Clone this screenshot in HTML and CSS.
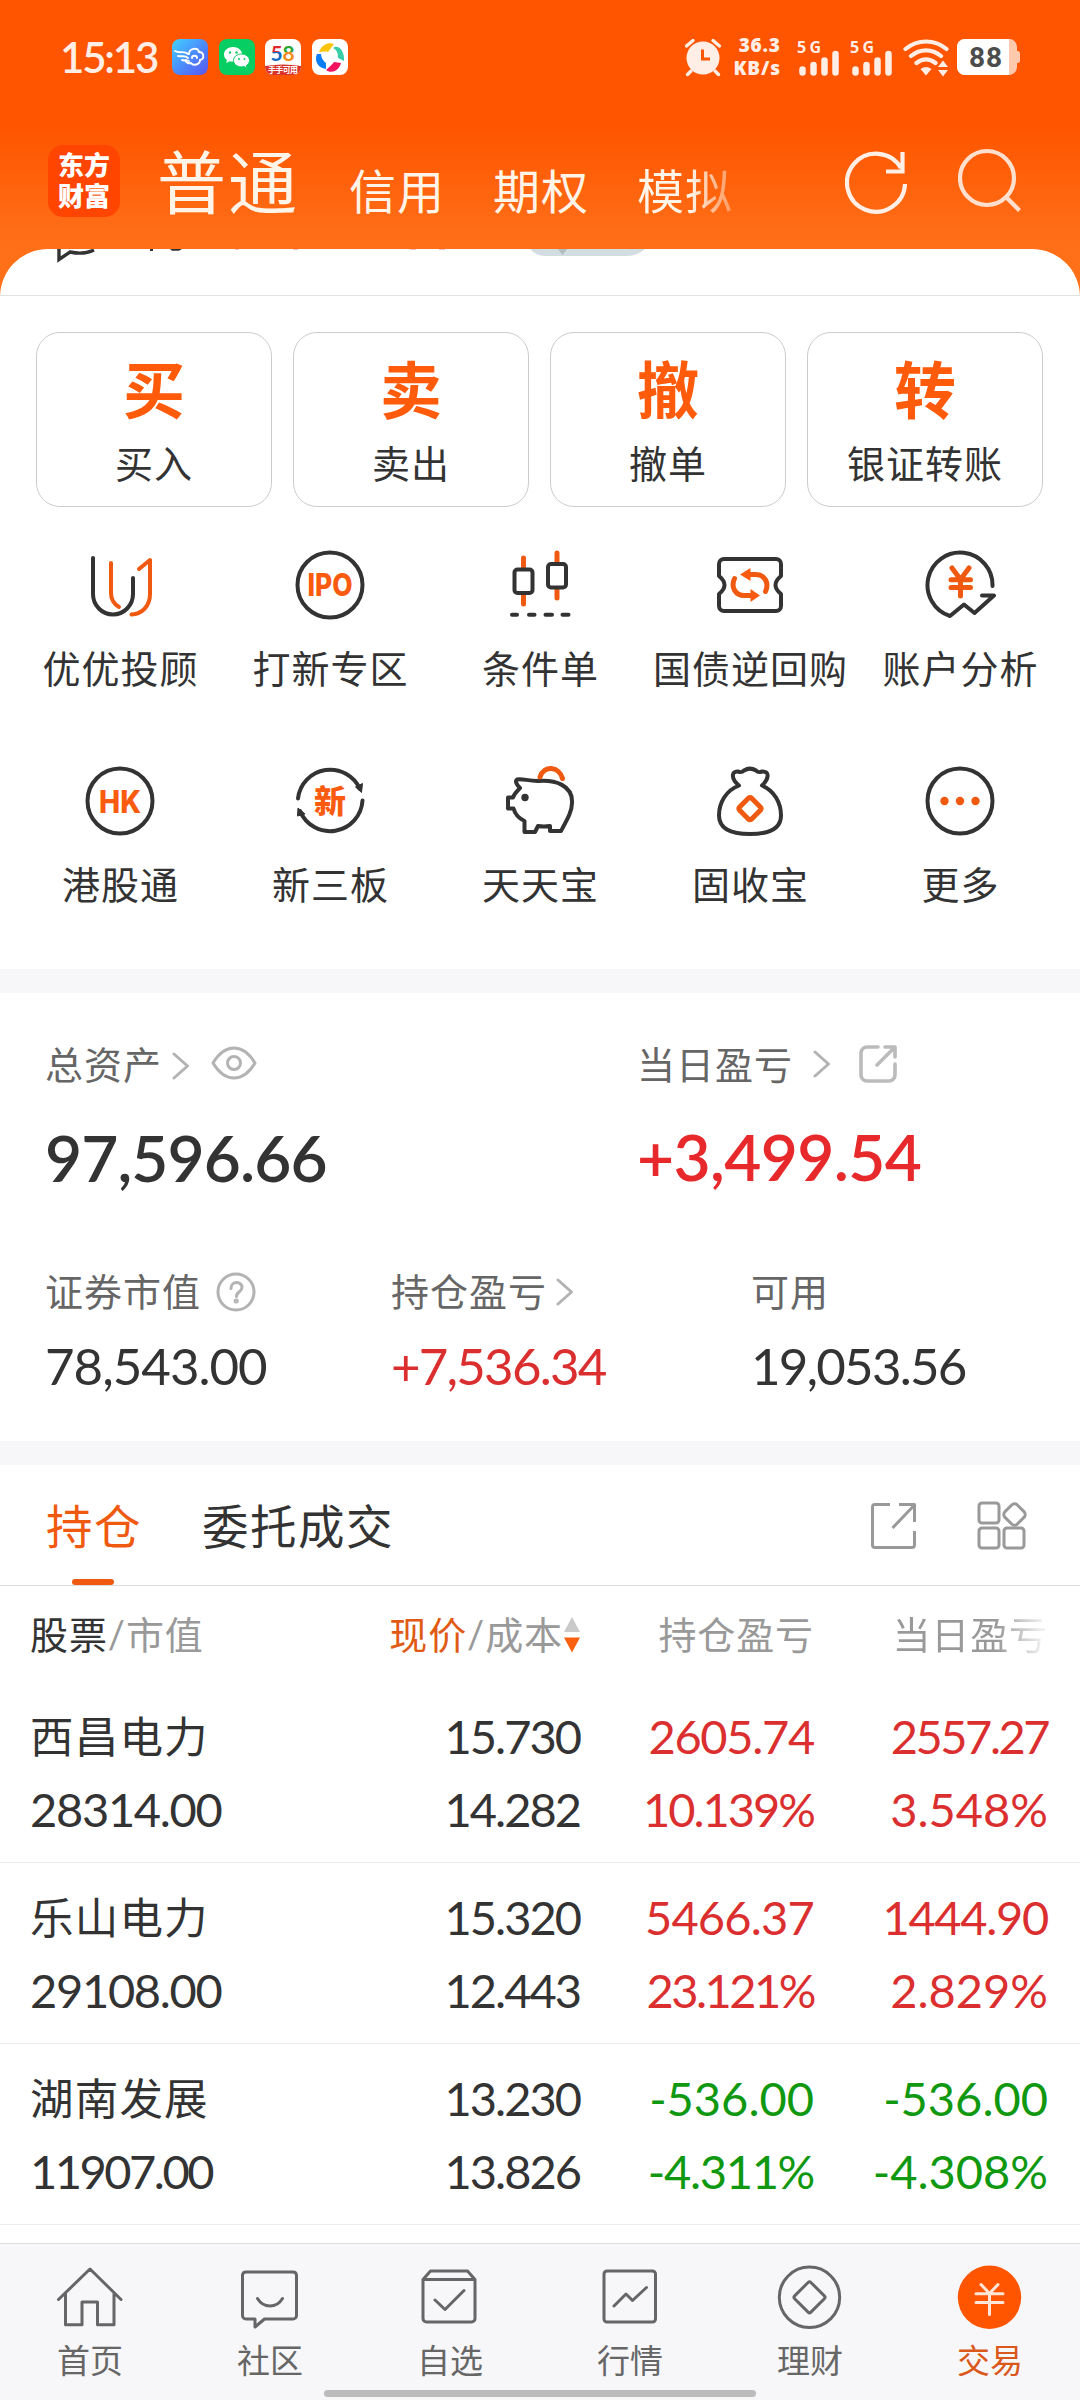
FILE: index.html
```html
<!DOCTYPE html>
<html lang="zh-CN">
<head>
<meta charset="utf-8">
<title>交易</title>
<link rel="stylesheet" href="styles.css">
</head>
<body>
<div class="app">
<header class="top">
  <div class="status">
    <span class="clock">15:13</span>
    <div class="apps">
      <svg width="36" height="36" viewBox="0 0 36 36"><defs><linearGradient id="sky" x1="0" y1="0" x2="1" y2="1"><stop offset="0" stop-color="#41d3ff"/><stop offset=".5" stop-color="#4a8dfb"/><stop offset="1" stop-color="#5a55f2"/></linearGradient></defs><rect width="36" height="36" rx="8" fill="url(#sky)"/><g fill="none" stroke="#fff" stroke-width="1.9" stroke-linecap="round"><path d="M3 12c5 3 9-1 13 3M6 17c4 1 7-1 10 2M10 21c3 1 5 0 7 1"/><path d="M17 15c0-6 9-7 10-2 5 0 6 7 1 8 0 5-7 6-9 3-4 1-6-2-5-3M20 19c0-3 5-3 5 0"/></g></svg>
      <svg width="36" height="36" viewBox="0 0 36 36"><rect width="36" height="36" rx="8" fill="#07ce62"/><path d="M14 8c-5 0-9 3.400-9 7.500 0 2.300 1.200 4.300 3 5.600l-.8 3 3.500-1.800c4 1 12-1 12.500-6.800C23.200 11.400 19 8 14 8z" fill="#fff"/><path d="M22.500 15c-4.500 0-8 2.900-8 6.500s3.500 6.400 8 6.400l2.500-.3 3 1.500-.7-2.500c2-1.200 3.200-3 3.200-5.100 0-3.600-3.500-6.500-8-6.500z" fill="#fff" stroke="#07ce62"/><g fill="#07ce62"><circle cx="11" cy="13.500" r="1.200"/><circle cx="17.500" cy="13.500" r="1.200"/><circle cx="20" cy="20" r="1"/><circle cx="25.500" cy="20" r="1"/></g></svg>
      <svg width="36" height="36" viewBox="0 0 36 36"><defs><clipPath id="r58"><rect width="36" height="36" rx="8"/></clipPath><linearGradient id="five" x1="0" y1="0" x2="0" y2="1"><stop offset=".5" stop-color="#e0282d"/><stop offset=".5" stop-color="#1568c0"/></linearGradient><linearGradient id="eight" x1="0" y1="0" x2="0" y2="1"><stop offset=".5" stop-color="#2ba436"/><stop offset=".5" stop-color="#f08b1d"/></linearGradient></defs><g clip-path="url(#r58)"><rect width="36" height="36" fill="#fff"/><path d="M0 27q18-3 36 0v9H0z" fill="#d9322a"/><text x="5.500" y="22" class="n58" fill="url(#five)">5</text><text x="17.500" y="22" class="n58" fill="url(#eight)">8</text><text x="3" y="34" class="s58" textLength="30">手手可用</text></g></svg>
      <svg width="36" height="36" viewBox="0 0 36 36"><rect width="36" height="36" rx="8" fill="#fff"/><path d="M7 13C10 5 17 3 22 5l-6 8c-3-1-6 0-9 0z" fill="#fcc40b"/><path d="M21 9c5-4 12 3 11 13l-6-3c0-5-1-8-5-10z" fill="#38cda8"/><path d="M5 15c-3 7 1 14 9 15v-6c-3-2-5-6-5-9z" fill="#0a7cf5"/><path d="M14 31c5 4 13 1 15-7l-7-1c-2 3-5 5-8 8z" fill="#f3125d"/></svg>
    </div>
    <div class="radios">
      <svg class="alarm" width="38" height="40" viewBox="0 0 38 40"><g fill="none" stroke="#ffeee6" stroke-width="3.400" stroke-linecap="round"><path d="M2.500 9 9 3.500M35.500 9 29 3.500M7 34l-3.500 3.500M31 34l3.500 3.500"/></g><circle cx="19" cy="21" r="16.500" fill="#ffeee6"/><path d="M18.500 12.500V22H26" fill="none" stroke="#ff5500" stroke-width="3"/></svg>
      <div class="speed"><b>36.3</b><b>KB/s</b></div>
      <svg class="sig" width="44" height="40" viewBox="0 0 44 40"><text class="g5" x="0" y="16" textLength="24">5G</text><g stroke="#ffeee6" stroke-width="6.500" stroke-linecap="round"><path d="M5.500 32.500v3M16.500 28v7.500M27.500 23.500v12M38.500 17v18.500"/></g></svg>
      <svg class="sig" width="44" height="40" viewBox="0 0 44 40"><text class="g5" x="0" y="16" textLength="24">5G</text><g stroke="#ffeee6" stroke-width="6.500" stroke-linecap="round"><path d="M5.500 32.500v3M16.500 28v7.500M27.500 23.500v12M38.500 17v18.500"/></g></svg>
      <svg class="wifi" width="46" height="40" viewBox="0 0 46 40"><g fill="none" stroke="#ffeee6" stroke-width="4.200" stroke-linecap="round"><path d="M2.500 12c12-10 29-10 41 0M8 19c9-7.500 21-7.500 30 0M13.500 26c6-4.500 13-4.500 19 0"/></g><path d="M17.500 32q5.500-4 11 0L23 38.500zM35 30l5-6.500 5 6.500zM35 33l5 6.500 5-6.500z" fill="#ffeee6"/></svg>
      <svg class="bat" width="64" height="36" viewBox="0 0 64 36"><path d="M8 0H53a8 8 0 0 1 7 8v4c3 0 3 2 3 3v6c0 1 0 3-3 3v4a8 8 0 0 1-7 8H8a8 8 0 0 1-8-8V8a8 8 0 0 1 8-8z" fill="#ffc9ae"/><path d="M8 0H52V36H8a8 8 0 0 1-8-8V8a8 8 0 0 1 8-8z" fill="#fff"/><text x="12" y="28" class="pct" textLength="34">88</text></svg>
    </div>
  </div>
  <div class="bar">
    <div class="logo"><span>东方</span><span>财富</span></div>
    <nav class="modes"><span class="on">普通</span><span>信用</span><span>期权</span><span class="fade">模拟</span></nav>
    <svg class="refresh" width="64" height="66" viewBox="0 0 64 66"><path d="M60 35A29 29 0 1 1 56 19M57.500 3V22.500H41" fill="none" stroke="#ffefe6" stroke-width="4.200"/></svg>
    <svg class="search" width="66" height="66" viewBox="0 0 66 66"><circle cx="29" cy="30" r="27" fill="none" stroke="#ffe0cf" stroke-width="4.200"/><path d="M47.500 48.500 61.500 62.500" stroke="#ffe0cf" stroke-width="4.200"/></svg>
  </div>
</header>

<main class="panel">
  <div class="peek">
    <svg width="1080" height="14" viewBox="0 0 1080 14"><path d="M59 0v10.500L70 3c9 2 18 1 24-2" fill="none" stroke="#333" stroke-width="3.400"/><path d="M150 0h3v2h-3zM170 0h12l-3 1.800h-7z" fill="#333"/><path d="M235 0h4v.6h-4zM293 0h5v.6h-5zM410 0h6v.6h-6zM439 0h6v.6h-6z" fill="#e8292b" opacity=".6"/><path d="M530 0q6 7 15 7h82q10 0 18-7z" fill="#d3dde1"/><path d="M558 0h9l-4.500 6z" fill="#b3bcc0"/></svg>
  </div>

  <section class="cards">
    <div class="card"><b>买</b><span>买入</span></div>
    <div class="card"><b>卖</b><span>卖出</span></div>
    <div class="card"><b>撤</b><span>撤单</span></div>
    <div class="card"><b>转</b><span>银证转账</span></div>
  </section>

  <section class="tools">
    <div class="tool"><svg viewBox="0 0 72 72"><path class="k" d="M9 9V45a20 20.500 0 0 0 40 0V29"/><path class="o" d="M27 14V44c0 6 3 11 8 14M55 20 66 11V45c0 12-8 20-18.500 20.500"/></svg><span>优优投顾</span></div>
    <div class="tool"><svg viewBox="0 0 72 72"><circle class="k" cx="36" cy="36" r="32.500"/><text x="13.500" y="47" class="ipo" textLength="45" lengthAdjust="spacingAndGlyphs">IPO</text></svg><span>打新专区</span></div>
    <div class="tool"><svg viewBox="0 0 72 72"><path class="o w" d="M19.500 9v9M19.500 47v8M53 4v9M53 41v8"/><rect class="k" x="10.500" y="20.500" width="18" height="23.500" rx="3"/><rect class="k" x="44" y="15" width="18" height="23.500" rx="3"/><path class="k" d="M8 65.700h5M25 65.700h5.500M41.500 65.700h6.500M58.500 65.700h6"/></svg><span>条件单</span></div>
    <div class="tool"><svg viewBox="0 0 72 72"><path class="k" d="M10 10H62a5 5 0 0 1 5 5V27q-11 9 0 18V57a5 5 0 0 1-5 5H10a5 5 0 0 1-5-5V45q11-9 0-18V15a5 5 0 0 1 5-5z"/><path class="o w" d="M20.500 29.500c-4 9 1 17 10 17H37M51.500 42.500c4-9-1-17-10-17H35"/><path d="M26 25.500 36.500 19v13zM46 46.500 36.500 40v13z" fill="#fa5b0f"/></svg><span>国债逆回购</span></div>
    <div class="tool"><svg viewBox="0 0 72 72"><path class="k" d="M68.500 37A32.500 32.500 0 1 0 26 67L40 55.500 50.500 64 70 46.500H58"/><path class="o w" d="M28 19l8.500 11.500L45 19M36.500 31V47M27 30.800H46.500M27 38.500H46.500"/></svg><span>账户分析</span></div>
    <div class="tool"><svg viewBox="0 0 72 72"><circle class="k" cx="36" cy="36" r="32.500"/><text x="15" y="47.500" class="ipo" textLength="42" lengthAdjust="spacingAndGlyphs">HK</text></svg><span>港股通</span></div>
    <div class="tool"><svg viewBox="0 0 72 72"><path class="k" d="M4 33.500A32.500 32.500 0 0 1 66 24M68.500 35.500A32.500 32.500 0 0 1 6 46"/><path d="M61.500 22l7-3.500-1 9zM4 43l7 6-7.500 2z" fill="#333" stroke="#333"/><text x="20" y="47.500" class="xin">新</text></svg><span>新三板</span></div>
    <div class="tool"><svg viewBox="0 0 72 72"><path class="k" d="M16 23C12 19 11 16 13 14.500c5-1.500 12 2 22 1.500 16-1 34 4 33 22 0 8-4 15-11 28H46v-5q-6 1-12 0l-3 6H20.500V56C14 53 11 49 9.500 43.500H4V32.500H9c1-4 4-6 7-9.500z"/><circle cx="21" cy="32.500" r="3.700" fill="#333"/><path class="o w" d="M36 12c4-12 19-11 22.500 1.500"/></svg><span>天天宝</span></div>
    <div class="tool"><svg viewBox="0 0 72 72"><path class="k" d="M25 20.500C17 14 17 6 24 6.500c3 1 4 1 6-1 4-2.500 8-2.500 12 0 2 2 3 2 6 1 8-.5 7 7.500 0 14 12 5 19 17 19 30 0 12-10 18.500-31 18.500S5 62.500 5 50.500c0-13 7-25 20-30z"/><rect class="o w" x="-8.500" y="-8.500" width="17" height="17" rx="2" transform="translate(36 43.600) rotate(45)"/></svg><span>固收宝</span></div>
    <div class="tool"><svg viewBox="0 0 72 72"><circle class="k" cx="36" cy="36" r="32.500"/><g fill="#f05a10"><circle cx="20.500" cy="36" r="4.200"/><circle cx="36" cy="36" r="4.200"/><circle cx="51.500" cy="36" r="4.200"/></g></svg><span>更多</span></div>
  </section>

  <section class="assets">
    <div class="main-row">
      <div class="cell">
        <div class="lab"><span>总资产</span><svg class="chev c1" viewBox="0 0 18 28"><path d="M2 2 15.500 14 2 26"/></svg><svg class="eye" viewBox="0 0 46 34"><path d="M2 17Q11 2 23 2T44 17Q35 32 23 32T2 17z"/><circle cx="23" cy="17" r="6.500"/></svg></div>
        <div class="big">97,596.66</div>
      </div>
      <div class="cell">
        <div class="lab"><span>当日盈亏</span><svg class="chev c2" viewBox="0 0 18 28"><path d="M2 2 15.500 14 2 26"/></svg><svg class="share" viewBox="0 0 40 40"><path d="M20 3H9a6 6 0 0 0-6 6V31a6 6 0 0 0 6 6H31a6 6 0 0 0 6-6V20M27 3H37V13M36 4 19 21"/></svg></div>
        <div class="big up">+3,499.54</div>
      </div>
    </div>
    <div class="sub-row">
      <div class="cell"><div class="lab"><span>证券市值</span><svg class="help" viewBox="0 0 40 40"><circle cx="20" cy="20" r="18"/><path d="M15 16.500c0-8 11-7.500 11-1 0 4.500-5.500 4-5.500 9"/><circle cx="20.200" cy="29" r="1" /></svg></div><div class="mid">78,543.00</div></div>
      <div class="cell"><div class="lab"><span>持仓盈亏</span><svg class="chev c3" viewBox="0 0 18 28"><path d="M2 2 15.500 14 2 26"/></svg></div><div class="mid up">+7,536.34</div></div>
      <div class="cell"><div class="lab"><span>可用</span></div><div class="mid nar">19,053.56</div></div>
    </div>
  </section>

  <section class="holdings">
    <div class="tabs">
      <span class="tab on">持仓</span><span class="tab">委托成交</span>
      <svg class="t1" viewBox="0 0 50 50"><path d="M21 3.500H6A2.500 2.500 0 0 0 3.500 6V44A2.500 2.500 0 0 0 6 46.500H43A2.500 2.500 0 0 0 45.500 44V30M30 3.500H45.500V21M44.500 5 23.500 27"/></svg>
      <svg class="t2" viewBox="0 0 52 52"><rect x="3" y="3" width="20" height="20" rx="3"/><rect x="3" y="28" width="20" height="20" rx="3"/><rect x="28" y="28" width="20" height="20" rx="3"/><rect x="-8.700" y="-8.700" width="17.400" height="17.400" rx="4" transform="translate(38.500 14.500) rotate(45)"/></svg>
    </div>
    <div class="row head">
      <span class="name"><i class="dk">股票</i>/市值</span>
      <span class="c"><i class="or">现价</i>/成本<svg class="sort" viewBox="0 0 16 36"><path d="M8 0 16 15H0z" fill="#c9c9c9"/><path d="M0 20.500H16L8 35.500z" fill="#f9600f"/></svg></span>
      <span class="c">持仓盈亏</span><span class="c last">当日盈亏</span>
    </div>
    <div class="row"><span class="name"><em>西昌电力</em>28314.00</span><span class="c s2">15.730<br>14.282</span><span class="c up">2605.74<br><i class="s2">10.139%</i></span><span class="c up"><i class="s3">2557.27</i><br><i class="s0">3.548%</i></span></div>
    <div class="row"><span class="name"><em>乐山电力</em>29108.00</span><span class="c s2">15.320<br>12.443</span><span class="c up"><i class="s1">5466.37</i><br><i class="s3">23.121%</i></span><span class="c up">1444.90<br><i class="s0">2.829%</i></span></div>
    <div class="row"><span class="name"><em>湖南发展</em><i class="s3">11907.00</i></span><span class="c s2">13.230<br>13.826</span><span class="c down"><i class="s0">-536.00</i><br>-4.311%</span><span class="c down"><i class="s0">-536.00<br>-4.308%</i></span></div>
  </section>
</main>

<footer class="dock">
  <div class="it"><svg viewBox="0 0 72 72"><path d="M4.500 38.500 36 8 67 38.500M11.500 33V63.700H28V41H43.500V63.700H60V33"/></svg>首页</div>
  <div class="it"><svg viewBox="0 0 72 72"><path d="M12 11H59a3.500 3.500 0 0 1 3.500 3V54.500a3.500 3.500 0 0 1-3.500 3.500H30.500L21 66V58H12a3.500 3.500 0 0 1-3.500-3.500V14a3.500 3.500 0 0 1 3.500-3zM23.500 37.500c6 10 19 10 25 0"/></svg>社区</div>
  <div class="it"><svg viewBox="0 0 72 72"><path d="M9 18.500 16.500 10H53.500L61 18.500V57.500a3.500 3.500 0 0 1-3.500 3.500H12.500A3.500 3.500 0 0 1 9 57.500V18.500H61M21 39 31 48.500 50 29.500"/></svg>自选</div>
  <div class="it"><svg viewBox="0 0 72 72"><rect x="10" y="10" width="51.500" height="51" rx="3"/><path d="M20 45 32 33l6.500 6.500L52.500 26.500"/></svg>行情</div>
  <div class="it"><svg viewBox="0 0 72 72"><circle cx="35.500" cy="36.300" r="30.200"/><rect x="-11.500" y="-11.500" width="23" height="23" rx="2" transform="translate(35.500 36.300) rotate(45)"/></svg>理财</div>
  <div class="it on"><svg viewBox="0 0 72 72"><circle cx="35.500" cy="36.300" r="31.700" fill="#ff5500" stroke="none"/><path d="M27 23.500 35.500 32.500 44 23.500M35.500 32V53.500M22 32.700H49M22 41.500H49" stroke="#ffe6d8"/></svg>交易</div>
  <div class="pill"></div>
</footer>
</div>
</body>
</html>
```
FILE: styles.css
```css
* { box-sizing: border-box; }
body { margin: 0; background: #fff; }
.app {
  width: 1080px; height: 2400px; overflow: hidden; position: relative;
  display: flex; flex-direction: column;
  font-family: Lato, "Noto Sans CJK SC", sans-serif;
  color: #333; font-size: 38px; letter-spacing: 1px; line-height: 1;
}
svg { display: block; flex: none; }
i, em { font-style: normal; }

/* header */
.top {
  flex: none; height: 296px; margin-bottom: -47px;
  background: linear-gradient(#ff5500 0, #ff5500 128px, #ff6f18 240px, #ff7019 100%);
  color: #fff2ea;
}
.status { height: 113px; padding-left: 60px; display: flex; align-items: center; }
.clock { width: 112px; font-size: 42px; font-weight: 600; letter-spacing: -2.200px; line-height: 50px; color: #ffeee6; white-space: nowrap; }
.apps { display: flex; gap: 10.600px; }
.n58 { font: 700 21px Lato, sans-serif; letter-spacing: 0; }
.s58 { font: 700 8px "Noto Sans CJK SC", sans-serif; fill: #fff; letter-spacing: 0; }
.radios { display: flex; align-items: center; margin-left: 336px; color: #ffeee6; }
.speed { width: 62px; margin-left: 13px; display: flex; flex-direction: column; gap: 4px; font: 700 19px/19px "Noto Sans", sans-serif; letter-spacing: .8px; }
.speed b { width: 46px; display: flex; justify-content: flex-end; }
.sig { margin-right: 9px; overflow: visible; }
.g5 { font: 700 16px "Noto Sans", sans-serif; fill: #ffeee6; letter-spacing: 0; }
.wifi { margin-right: 8px; }
.pct { font: 700 28px Roboto, sans-serif; fill: #4c4c4c; }
.bar { height: 136px; padding: 32px 0 0 48px; display: flex; align-items: flex-start; }
.logo {
  width: 72px; height: 72px; border-radius: 15px; background: #ff4500;
  display: flex; flex-direction: column; align-items: center; justify-content: center;
  font-size: 26px; line-height: 31px; font-weight: 900; letter-spacing: 0; color: #fff;
}
.modes { display: flex; align-items: baseline; width: 725px; padding-left: 37px; font-size: 47px; line-height: 76px; color: #fff4e8; }
.modes span { margin-right: 48px; }
.modes .on { font-size: 69px; letter-spacing: 2px; margin-right: 50px; }
.modes .fade { margin: 0; color: transparent; background: linear-gradient(90deg, #fff4e8 56%, #ffb183 85%, #ff9a60); background-clip: text; -webkit-background-clip: text; }
.refresh { margin-top: 4px; }
.search { margin: 3px 0 0 49px; }

/* content */
.panel { flex: none; height: 1994px; background: #fff; border-radius: 48px 48px 0 0; overflow: hidden; }
.peek { height: 47px; border-bottom: 1px solid #e3e3e3; }
.cards { display: flex; gap: 21px; padding: 36px 37px 0 36px; }
.card {
  flex: 1; height: 175px; border: 1px solid #ccc; border-radius: 24px;
  display: flex; flex-direction: column; align-items: center; padding-top: 23px;
}
.card b { font-size: 62px; line-height: 68px; color: #ff5b0a; letter-spacing: 0; }
.card span { margin-top: 16px; line-height: 46px; }
.tools { display: grid; grid-template-columns: repeat(5, 210px); grid-auto-rows: 215.500px; padding: 42px 15px 0; height: 462px; }
.tool { display: flex; flex-direction: column; align-items: center; white-space: nowrap; }
.tool svg { width: 72px; height: 72px; margin-bottom: 24px; }
.tool span { line-height: 46px; padding-left: 1px; }
.k, .o { fill: none; stroke: #333; stroke-width: 4; stroke-linecap: round; stroke-linejoin: round; }
.o { stroke: #f05a10; }
.w { stroke-width: 5; }
.ipo { font: 800 31px Inter, sans-serif; fill: #fa5b0f; letter-spacing: 0; }
.xin { font: 900 32px "Noto Sans CJK SC", sans-serif; fill: #fa5b0f; letter-spacing: 0; }

.assets { height: 496px; border: solid #f7f7f9; border-width: 24px 0; padding: 48px 0 0 45px; color: #333; }
.main-row { display: grid; grid-template-columns: 592px 1fr; height: 227px; }
.sub-row { display: grid; grid-template-columns: 346px 360px 1fr; }
.lab { display: flex; align-items: center; height: 46px; color: #666; white-space: nowrap; }
.lab svg, .tabs svg, .dock svg { fill: none; stroke: #b3b3b3; stroke-width: 3; stroke-linecap: round; stroke-linejoin: round; }
.chev { width: 18px; height: 28px; }
.c1 { margin: 4px 0 0 10px; }
.c2 { margin: 0 0 0 20px; }
.c3 { margin: 2px 0 0 9px; }
.eye { width: 46px; height: 34px; margin: -2px 0 0 21px; }
.share { width: 40px; height: 40px; margin-left: 27px; }
.help { width: 40px; height: 40px; margin: 2px 0 0 15px; }
.lab .share { stroke: #bbb; stroke-width: 3.600; }
.big { margin-top: 37px; font-size: 64px; line-height: 68px; font-weight: 600; letter-spacing: -.9px; }
.mid { margin-top: 27px; font-size: 51px; line-height: 50px; letter-spacing: -1px; }
.mid.up { letter-spacing: -1.800px; }
.mid.nar { letter-spacing: -1.800px; }
.up { color: #db2f2f; }
.big.up { color: #e8292b; margin-top: 36px; letter-spacing: -.6px; }
.down { color: #109810; }

.tabs { height: 121px; border-bottom: 1px solid #ddd; display: flex; align-items: center; padding-left: 46px; font-size: 46.500px; letter-spacing: 1.500px; }
.tab { position: relative; line-height: 123px; height: 121px; margin-right: 60px; }
.tab.on { color: #f05a10; }
.tab.on::after { content: ""; position: absolute; left: 26px; bottom: 1px; width: 42px; height: 6px; border-radius: 3px; background: #f05a10; }
.tabs .t1 { width: 50px; height: 50px; margin: 2px 0 0 415px; stroke: #999; stroke-linecap: butt; }
.tabs .t2 { width: 52px; height: 52px; margin: 2px 0 0 57px; stroke: #999; }
.row {
  height: 181px; display: grid; grid-template-columns: 281px 269px 234px 234px; padding: 18px 31px 0 30px;
  border-bottom: 1px solid #ececec; font-size: 47px; line-height: 73px; letter-spacing: -1.300px; white-space: nowrap;
}
.row .c { text-align: right; }
.name em { display: block; font-size: 43.500px; letter-spacing: 1.200px; }
.s0 { letter-spacing: 0; }
.s1 { letter-spacing: -.8px; }
.s2 { letter-spacing: -2px; }
.s3 { letter-spacing: -2.500px; }
.row.head { height: 96px; padding-top: 25px; border: 0; font-size: 38px; line-height: 46px; letter-spacing: .9px; color: #999; }
.dk { color: #333; }
.or { color: #e05a14; }
.head .c { display: flex; justify-content: flex-end; align-items: center; height: 46px; }
.sort { width: 16px; height: 36px; margin: 2px 0 0 1px; }
.head .last { color: transparent; background: linear-gradient(90deg, #999 78%, #eee 97%); background-clip: text; -webkit-background-clip: text; }

/* bottom bar */
.dock {
  position: relative; flex: none; height: 157px; background: #f7f7fa; border-top: 1px solid #dcdee0;
  display: grid; grid-template-columns: repeat(6, 180px); padding-top: 17px;
  font-size: 33px; line-height: 40px; letter-spacing: 0; color: #666;
}
.it { display: flex; flex-direction: column; align-items: center; gap: 7px; }
.dock svg { width: 72px; height: 72px; stroke: #666; }
.it.on { color: #d9581a; }
.pill { position: absolute; left: 324px; bottom: 3px; width: 432px; height: 7px; border-radius: 4px; background: #bbb; }
```
